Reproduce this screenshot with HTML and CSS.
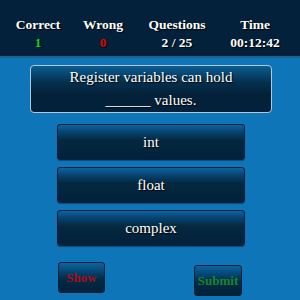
FILE: index.html
```html
<!DOCTYPE html>
<html>
<head>
<meta charset="utf-8">
<link rel="stylesheet" href="styles.css">
</head>
<body>
<div class="header">
  <div class="stat"><div class="label">Correct</div><div class="value green">1</div></div>
  <div class="stat"><div class="label">Wrong</div><div class="value red">0</div></div>
  <div class="stat"><div class="label">Questions</div><div class="value">2 / 25</div></div>
  <div class="stat"><div class="label">Time</div><div class="value">00:12:42</div></div>
</div>
<div class="question">Register variables can hold<br>______ values.</div>
<div class="options">
  <div class="option">int</div>
  <div class="option">float</div>
  <div class="option">complex</div>
</div>
<div class="actions">
  <div class="btn show">Show</div>
  <div class="btn submit">Submit</div>
</div>
</body>
</html>
```
FILE: styles.css
```css
html, body {
  margin: 0;
  padding: 0;
}
body {
  width: 300px;
  height: 300px;
  background: #0e75b9;
  font-family: "Liberation Serif", "Times New Roman", serif;
  color: #fff;
  overflow: hidden;
}
.header {
  background: #03213a;
  height: 58px;
  box-sizing: border-box;
  padding-top: 16px;
  border-bottom: 2px solid #1a6294;
  display: grid;
  grid-template-columns: 76px 54px 94px 62px;
}
.stat {
  text-align: center;
  font-weight: bold;
  font-size: 13.5px;
  line-height: 18px;
  text-shadow: 1px 1px 1px #000;
}
.green { color: #12d21a; }
.red { color: #e00808; }
.question {
  margin: 7px 0 0 30px;
  width: 242px;
  box-sizing: border-box;
  border: 1px solid #b4c6d8;
  border-radius: 4px;
  background: linear-gradient(to bottom, #0b5d92 0%, #05304f 35%, #03223a 60%, #03213a 100%);
  text-align: center;
  font-size: 15px;
  line-height: 23px;
  height: 48px;
  text-shadow: 1px 1px 1px #000;
}
.options {
  margin: 11px 0 0 57px;
  width: 188px;
  display: flex;
  flex-direction: column;
  gap: 7px;
}
.option {
  height: 36px;
  box-sizing: border-box;
  border: 1px solid #042036;
  border-radius: 3px;
  background: linear-gradient(to bottom, #0b64a0 0%, #074472 20%, #04283f 45%, #03213a 100%);
  text-align: center;
  font-size: 15px;
  line-height: 34px;
  text-shadow: 1px 1px 1px #000;
  box-shadow: 0 1px 1px rgba(0,0,0,0.35);
}
.actions {
  display: flex;
  align-items: flex-start;
  margin: 16px 0 0 58px;
  gap: 89px;
}
.btn {
  height: 31px;
  box-sizing: border-box;
  border: 1px solid #042036;
  border-radius: 3px;
  background: linear-gradient(to bottom, #0b64a0 0%, #064a7a 25%, #042a45 55%, #03213a 100%);
  text-align: center;
  font-weight: bold;
  font-size: 13px;
  line-height: 29px;
}
.show {
  width: 47px;
  color: #a5101c;
}
.submit {
  width: 48px;
  margin-top: 3px;
  color: #12882a;
}
```
